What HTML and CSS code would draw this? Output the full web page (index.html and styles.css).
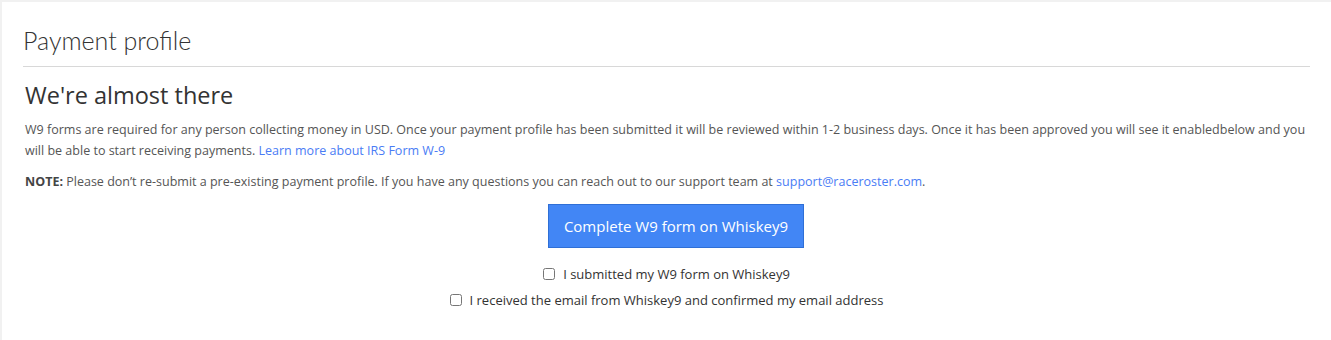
FILE: index.html
```html
<!DOCTYPE html>
<html lang="en">
<head>
    <meta charset="UTF-8">
    <title>Payment profile</title>
    <link rel="stylesheet" href="styles.css">
</head>
<body>
    <div class="panel">
        <h2 class="panel-title">Payment profile</h2>
        <div class="panel-body">
            <h3>We're almost there</h3>
            <p>W9 forms are required for any person collecting money in USD. Once your payment profile has been submitted it will be reviewed within 1-2 business days. Once it has been approved you will see it enabledbelow and you will be able to start receiving payments. <a href="#">Learn more about IRS Form W-9</a></p>
            <p><strong>NOTE:</strong> Please don’t re-submit a pre-existing payment profile. If you have any questions you can reach out to our support team at <a href="#">support@raceroster.com</a>.</p>
            <div class="actions">
                <button class="btn-primary">Complete W9 form on Whiskey9</button>
                <label class="check"><input type="checkbox"> I submitted my W9 form on Whiskey9</label>
                <label class="check"><input type="checkbox"> I received the email from Whiskey9 and confirmed my email address</label>
            </div>
        </div>
    </div>
</body>
</html>
```

FILE: styles.css
```css
body { margin: 0; background-color: #f1f1f1; font-family: "Open Sans", Arial, sans-serif; color: #555; }
.panel { margin: 2px 0 0 2px; background-color: white; padding: 0 21px; height: 338px; }
.panel-title { margin: 0; padding: 24px 0 12px 0; font-family: Lato, "Open Sans", sans-serif; font-weight: 300; font-size: 25px; line-height: 28px; color: #333; border-bottom: 1px solid #d8d8d8; }
.panel-body { padding: 0 2px; }
h3 { margin: 13px 0 9px 0; font-size: 23.5px; font-weight: 400; line-height: 30px; color: #333; }
p { margin: 0 0 10px 0; font-size: 12.52px; line-height: 21px; }
strong { color: #444; }
a { color: #4a7cf5; text-decoration: none; }
.actions { display: flex; flex-direction: column; align-items: center; }
.btn-primary { margin: 2px 0 13px 19px; height: 44px; padding: 0 15px; background-color: #4286f5; border: 1px solid #2f6fd6; color: white; font-family: "Open Sans", Arial, sans-serif; font-size: 15px; }
.check { display: flex; align-items: center; gap: 8px; font-size: 13px; line-height: 26px; color: #333; }
.check input { margin: 0; width: 12px; height: 12px; }
```
